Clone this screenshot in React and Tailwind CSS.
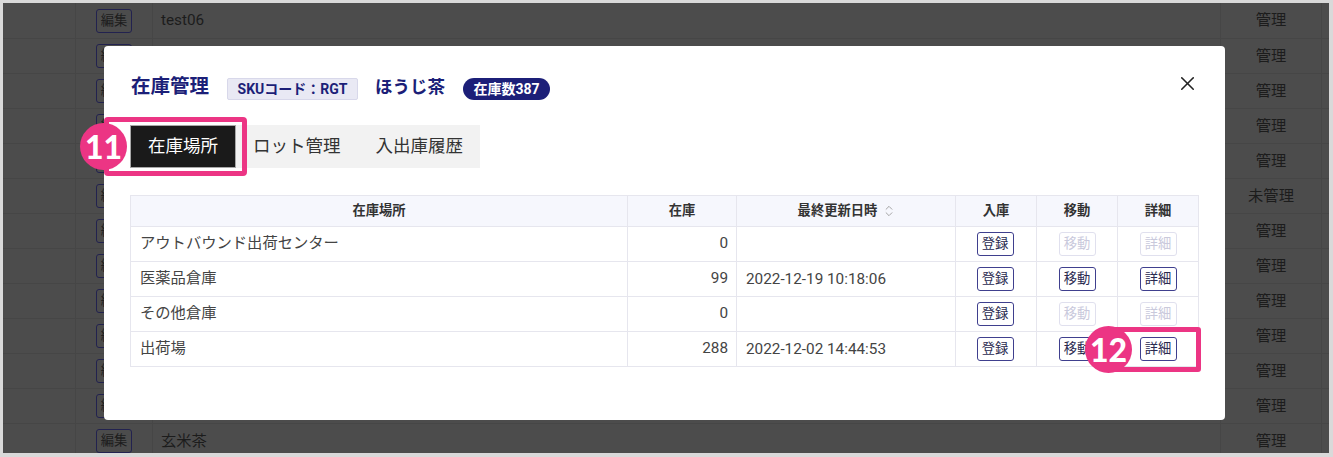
import React from 'react';
import { ChevronsUpDown, X } from 'lucide-react';

const bgRows = [
  { name: 'test06', status: '管理' },
  { name: '', status: '管理' },
  { name: '', status: '管理' },
  { name: '', status: '管理' },
  { name: '', status: '管理' },
  { name: '', status: '未管理' },
  { name: '', status: '管理' },
  { name: '', status: '管理' },
  { name: '', status: '管理' },
  { name: '', status: '管理' },
  { name: '', status: '管理' },
  { name: '', status: '管理' },
  { name: '玄米茶', status: '管理' },
];

const stockRows = [
  { place: 'アウトバウンド出荷センター', qty: 0, date: '', active: false },
  { place: '医薬品倉庫', qty: 99, date: '2022-12-19 10:18:06', active: true },
  { place: 'その他倉庫', qty: 0, date: '', active: false },
  { place: '出荷場', qty: 288, date: '2022-12-02 14:44:53', active: true },
];

function SmallButton({ label, disabled }) {
  return (
    <button
      className={`mx-auto flex h-6 w-[37px] items-center justify-center rounded-[3px] border bg-white pb-px text-[13.3px] leading-none ${
        disabled ? 'border-[#e0e0ee] text-[#c9c9dc]' : 'border-[#3f3f8e] text-[#2a2a50]'
      }`}
    >
      {label}
    </button>
  );
}

function Badge({ n, className }) {
  return (
    <div className={`absolute flex h-[47px] w-[47px] items-center justify-center rounded-full bg-[#ec3584] font-['Lato',sans-serif] text-[32px] font-black leading-none text-white ${className}`}>
      {n}
    </div>
  );
}

export default function App() {
  const th = 'border border-[#e6e6ee] bg-[#f6f7fd] text-[13.3px] font-bold text-[#333] text-center';
  const td = 'border border-[#e6e6ee] text-[15.3px] text-[#444]';

  return (
    <div className="relative h-[457px] w-[1333px] overflow-hidden bg-[#d9d9d9] pb-1 pl-[3px] pr-1 pt-[3px] font-['Roboto','Noto_Sans_CJK_JP',sans-serif]">
      {/* page behind the overlay */}
      <div className="h-full overflow-hidden bg-[#4c4c4c]">
        {bgRows.map((r, i) => (
          <div key={i} className={`flex border-b border-[#464646] text-[15.3px] text-[#1c1c1c] ${i === 0 ? 'h-[36px]' : 'h-[35px]'}`}>
            <div className="w-[73px] border-r border-[#464646]" />
            <div className="flex w-[77px] items-center justify-center border-r border-[#464646]">
              <span className="flex h-6 w-[36px] items-center justify-center rounded-[3px] border border-[#22224f] text-[13.3px] leading-none">編集</span>
            </div>
            <div className="flex flex-1 items-center pl-[8px]">{r.name}</div>
            <div className="flex w-[102px] items-center justify-center border-l border-r border-[#464646]">{r.status}</div>
            <div className="w-[7px]" />
          </div>
        ))}
      </div>

      {/* modal */}
      <div className="absolute left-[104px] top-[46px] h-[374px] w-[1121px] rounded-[4px] bg-white px-[26px] pt-8">
        <div className="flex h-[22px] items-center text-[#1c1f78]">
          <h2 className="mb-[5px] ml-px text-[19.5px] font-bold">在庫管理</h2>
          <span className="ml-[18px] flex h-[22px] w-[131px] items-center justify-center rounded-[2px] border border-[#d8d8ea] bg-[#e9e9f4] text-[14px] font-bold">SKUコード：RGT</span>
          <span className="mb-[3px] ml-[17px] text-[17.5px] font-bold">ほうじ茶</span>
          <span className="ml-[18px] flex h-[22px] w-[87px] items-center justify-center rounded-full bg-[#1c1f78] text-[14px] font-bold text-white">在庫数387</span>
          <X className="mb-3 ml-auto text-[#222]" size={23} strokeWidth={1.6} />
        </div>

        <div className="mt-[25px] flex h-[43px] w-[350px] items-center bg-[#f2f2f2] text-[17.5px] text-[#333]">
          <div className="flex h-full w-[106px] items-center justify-center border border-[#a8a8a8] bg-[#1a1a1a] text-white">在庫場所</div>
          <div className="ml-[17px]">ロット管理</div>
          <div className="ml-[35px]">入出庫履歴</div>
        </div>

        <table className="mt-[27px] w-[1068px] table-fixed border-collapse">
          <thead>
            <tr className="h-[31px]">
              <th className={`${th} w-[497px]`}>在庫場所</th>
              <th className={`${th} w-[109px]`}>在庫</th>
              <th className={`${th} w-[219px]`}>
                <span className="inline-flex items-center gap-[5px] pl-[2px]">
                  最終更新日時
                  <ChevronsUpDown size={14} className="text-[#999]" strokeWidth={1.5} />
                </span>
              </th>
              <th className={`${th} w-[81px]`}>入庫</th>
              <th className={`${th} w-[81px]`}>移動</th>
              <th className={`${th} w-[81px]`}>詳細</th>
            </tr>
          </thead>
          <tbody>
            {stockRows.map((r) => (
              <tr key={r.place} className="h-[35px]">
                <td className={`${td} px-[9px] pb-[2px]`}>{r.place}</td>
                <td className={`${td} px-[8px] pb-[2px] text-right`}>{r.qty}</td>
                <td className={`${td} px-[9px]`}>{r.date}</td>
                <td className={`${td} pr-[2px]`}><SmallButton label="登録" /></td>
                <td className={td}><SmallButton label="移動" disabled={!r.active} /></td>
                <td className={td}><SmallButton label="詳細" disabled={!r.active} /></td>
              </tr>
            ))}
          </tbody>
        </table>
      </div>

      {/* callouts */}
      <div className="absolute left-[104px] top-[117px] h-[59px] w-[143px] rounded-[4px] border-[5px] border-[#ec3584]" />
      <Badge n="11" className="left-[80px] top-[123px]" />
      <div className="absolute left-[1108px] top-[327px] h-[45px] w-[93px] rounded-[3px] border-[5px] border-[#ec3584]" />
      <Badge n="12" className="left-[1085px] top-[326px]" />
    </div>
  );
}
